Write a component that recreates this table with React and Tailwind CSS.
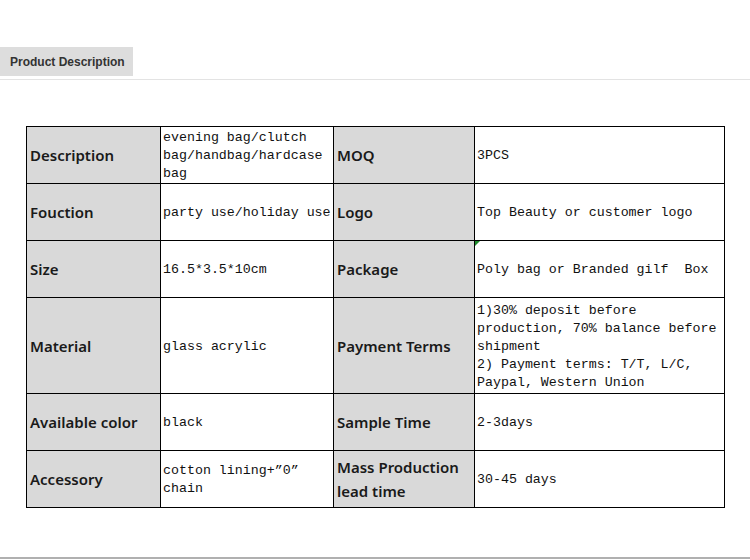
import React from "react";

const rows = [
  { h: "h-[57px]", a: "Description", b: "evening bag/clutch bag/handbag/hardcase bag", c: "MOQ", d: "3PCS" },
  { h: "h-[57px]", a: "Fouction", b: "party use/holiday use", c: "Logo", d: "Top Beauty or customer logo" },
  { h: "h-[57px]", a: "Size", b: "16.5*3.5*10cm", c: "Package", d: "Poly bag or Branded gilf  Box", mark: true },
  {
    h: "h-[96px]",
    a: "Material",
    b: "glass acrylic",
    c: "Payment Terms",
    d: "1)30% deposit before production, 70% balance before shipment\n2) Payment terms: T/T, L/C, Paypal, Western Union",
  },
  { h: "h-[57px]", a: "Available color", b: "black", c: "Sample Time", d: "2-3days" },
  { h: "h-[57px]", a: "Accessory", b: "cotton lining+\u201d0\u201d chain", c: "Mass Production lead time", d: "30-45 days", twoLine: true },
];

const labelCls =
  "border border-black bg-[#d9d9d9] pl-[3px] pr-[2px] align-middle text-[15px] font-semibold text-[#1a1a1a] font-['Noto_Sans','Noto_Sans_CJK_SC',sans-serif]";
const valueCls =
  "border border-black pl-[2px] pr-[1px] pt-[2px] align-middle text-[13.3px] leading-[18px] text-[#111] whitespace-pre-wrap font-['Liberation_Mono','Noto_Sans_CJK_SC',monospace]";

export default function App() {
  return (
    <div className="w-[750px] h-[560px] bg-white flex flex-col overflow-hidden">
      <div className="pt-[47px]">
        <div className="w-[133px] h-[29px] bg-[#dddddd] flex items-center pl-[10px] text-[12px] font-bold text-[#333] font-['Liberation_Sans',Arial,sans-serif]">
          Product Description
        </div>
        <div className="mt-[3px] h-px bg-[#e3e3e3]" />
      </div>
      <div className="pl-[26px] pt-[46px]">
        <table className="w-[698px] border-collapse border border-black table-fixed">
          <colgroup>
            <col className="w-[134px]" />
            <col className="w-[173px]" />
            <col className="w-[141px]" />
            <col className="w-[250px]" />
          </colgroup>
          <tbody>
            {rows.map((r, i) => (
              <tr key={i} className={r.h}>
                <td className={`${labelCls} leading-[18px]`}>{r.a}</td>
                <td className={valueCls}>{r.b}</td>
                <td className={`${labelCls} ${r.twoLine ? "leading-[24px]" : "leading-[18px]"}`}>{r.c}</td>
                <td className={`relative ${valueCls}`}>
                  {r.mark && (
                    <span className="absolute left-0 top-0 w-0 h-0 border-t-[5px] border-t-[#1d8a2a] border-r-[5px] border-r-transparent" />
                  )}
                  {r.d}
                </td>
              </tr>
            ))}
          </tbody>
        </table>
      </div>
      <div className="flex-1" />
      <div className="h-[2px] bg-[#b0b0b0] mb-[1px]" />
    </div>
  );
}
